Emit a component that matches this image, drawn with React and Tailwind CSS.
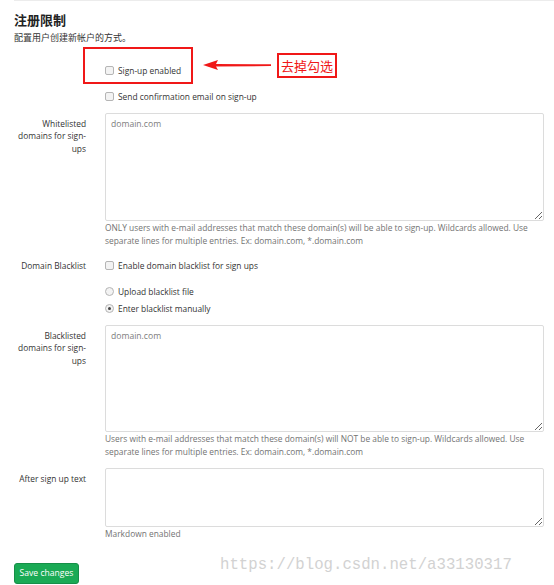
import React from "react";

function Box() {
  return (
    <span className="inline-block w-[9px] h-[9px] shrink-0 rounded-[2px] border border-[#b5b5b5] bg-[#f3f3f3]" />
  );
}

function Radio({ checked }) {
  return (
    <span className="flex w-[9px] h-[9px] shrink-0 items-center justify-center rounded-full border border-[#b5b5b5] bg-[#f3f3f3]">
      {checked ? <span className="w-[3px] h-[3px] rounded-full bg-[#444]" /> : null}
    </span>
  );
}

function Check({ children, radio, checked }) {
  return (
    <div className="flex items-center gap-[4px] h-[13px] leading-[13px] text-[#333]">
      {radio ? <Radio checked={checked} /> : <Box />}
      <span>{children}</span>
    </div>
  );
}

function Area({ h, placeholder }) {
  return (
    <textarea
      readOnly
      placeholder={placeholder}
      className={`block w-full ${h} border border-[#dcdcdc] rounded-[2px] px-[5px] pt-[4px] pb-[4px] text-[8.6px] leading-[13px] text-[#333] placeholder:text-[#7d7d7d] bg-white outline-none`}
    />
  );
}

function Label({ children }) {
  return (
    <div className="text-right text-[#333] leading-[12.5px] pt-[5px]">{children}</div>
  );
}

export default function App() {
  return (
    <div className="relative w-[554px] h-[585px] overflow-hidden bg-white font-['Open_Sans','Noto_Sans_CJK_SC',sans-serif] text-[8.4px]">
      <div className="ml-[14px] border-t border-[#ececec] pr-[10px]">
        <h3 className="pt-[10px] text-[13px] leading-[18px] font-bold text-[#222]">注册限制</h3>
        <p className="mt-[3px] text-[9px] leading-[12px] text-[#333]">配置用户创建新帐户的方式。</p>

        <div className="grid grid-cols-[72px_1fr] gap-x-[19px]">
          <div />
          <div className="mt-[20px]">
            <Check>Sign-up enabled</Check>
          </div>
          <div />
          <div className="mt-[13px]">
            <Check>Send confirmation email on sign-up</Check>
          </div>

          <div className="mt-[9.5px]">
            <Label>Whitelisted domains for sign-ups</Label>
          </div>
          <div className="mt-[9.5px]">
            <Area h="h-[108px]" placeholder="domain.com" />
            <p className="mt-[0.5px] text-[#737373] leading-[13px]">
              ONLY users with e-mail addresses that match these domain(s) will be able to sign-up. Wildcards allowed. Use separate lines for multiple entries. Ex: domain.com, *.domain.com
            </p>
          </div>

          <div className="mt-[12px] text-right text-[#333] leading-[13px]">Domain Blacklist</div>
          <div className="mt-[12px]">
            <Check>Enable domain blacklist for sign ups</Check>
          </div>

          <div />
          <div className="mt-[13px] flex flex-col gap-[4px]">
            <Check radio>Upload blacklist file</Check>
            <Check radio checked>Enter blacklist manually</Check>
          </div>

          <div className="mt-[9.5px]">
            <Label>Blacklisted domains for sign-ups</Label>
          </div>
          <div className="mt-[9.5px]">
            <Area h="h-[107px]" placeholder="domain.com" />
            <p className="mt-[0.5px] text-[#737373] leading-[13px]">
              Users with e-mail addresses that match these domain(s) will NOT be able to sign-up. Wildcards allowed. Use separate lines for multiple entries. Ex: domain.com, *.domain.com
            </p>
          </div>

          <div className="mt-[9.5px]">
            <Label>After sign up text</Label>
          </div>
          <div className="mt-[9.5px]">
            <Area h="h-[59px]" />
            <p className="text-[#737373] leading-[13px]">Markdown enabled</p>
          </div>
        </div>

        <button className="mt-[23px] h-[21px] w-[65px] rounded-[3px] bg-[#1aaa55] border border-[#168f48] text-white text-[8.6px] leading-[19px]">
          Save changes
        </button>
      </div>

      {/* annotation overlays */}
      <div className="absolute left-[83px] top-[47px] w-[110px] h-[37px] border-2 border-[#f01818]" />
      <svg className="absolute left-0 top-0" width="554" height="585">
        <polygon points="203,65 218,60 216,64 271,64.3 271,66 216,66.6 218,70" fill="#f01818" />
      </svg>
      <div className="absolute left-[277px] top-[53px] w-[60px] h-[25px] border-2 border-[#f01818] flex items-center justify-center text-[13px] text-[#f01818] font-['Noto_Sans_CJK_SC',sans-serif]">
        去掉勾选
      </div>
      <div className="absolute left-[220px] top-[555px] text-[15.7px] leading-[20px] text-[#d2d2d2] font-['Liberation_Mono',monospace]">
        https://blog.csdn.net/a33130317
      </div>
    </div>
  );
}
